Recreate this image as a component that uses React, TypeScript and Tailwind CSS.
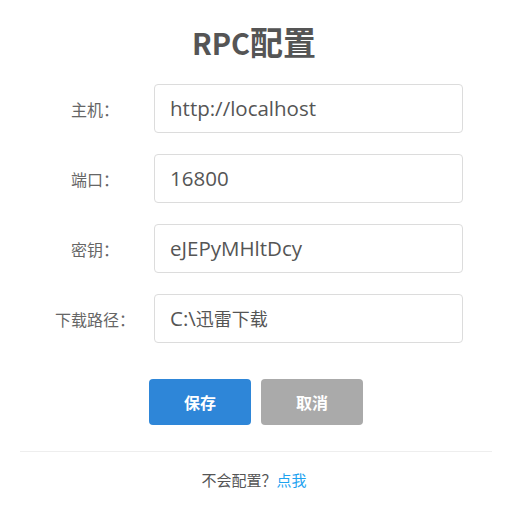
import React from "react";

const font = { fontFamily: '"Noto Sans CJK SC", "Noto Sans", sans-serif' };
const latin = { fontFamily: '"Open Sans", "Noto Sans CJK SC", sans-serif' };

type Part = { t: string; cjk?: boolean };
const rows: { label: string; parts: Part[] }[] = [
  { label: "主机：", parts: [{ t: "http://localhost" }] },
  { label: "端口：", parts: [{ t: "16800" }] },
  { label: "密钥：", parts: [{ t: "eJEPyMHltDcy" }] },
  { label: "下载路径：", parts: [{ t: "C:\\" }, { t: "迅雷下载", cjk: true }] },
];

export default function App() {
  return (
    <div className="w-[508px] h-[509px] bg-white" style={font}>
      <h1 className="pt-[20px] h-[64px] text-center leading-[42px] font-bold text-[#555]">
        <span className="text-[29px]">RPC</span>
        <span className="text-[33px]">配置</span>
      </h1>
      <div className="flex flex-col gap-[21px] pt-[20px] pl-[40px]">
        {rows.map((r) => (
          <div key={r.label} className="flex items-center gap-[4px]">
            <div className="w-[110px] text-center text-[16px] text-[#666]">{r.label}</div>
            <div className="w-[309px] h-[49px] rounded-[4px] border border-[#dcdcdc] px-[15px] flex items-center text-[#555] whitespace-pre">
              {r.parts.map((p, i) =>
                p.cjk ? (
                  <span key={i} className="text-[18px]" style={font}>{p.t}</span>
                ) : (
                  <span key={i} className="text-[20.5px]" style={latin}>{p.t}</span>
                )
              )}
            </div>
          </div>
        ))}
      </div>
      <div className="flex justify-center gap-[10px] mt-[36px] pl-[4px]">
        <button className="w-[102px] h-[46px] rounded-[4px] bg-[#2e86d8] text-white text-[16px] font-bold">保存</button>
        <button className="w-[102px] h-[46px] rounded-[4px] bg-[#aaaaaa] text-white text-[16px] font-bold">取消</button>
      </div>
      <div className="ml-[20px] w-[472px] mt-[26px] border-t border-[#eeeeee]" />
      <div className="mt-[17px] text-center text-[15px] text-[#555]">
        不会配置？<span className="text-[#1ea3f0]">点我</span>
      </div>
    </div>
  );
}
